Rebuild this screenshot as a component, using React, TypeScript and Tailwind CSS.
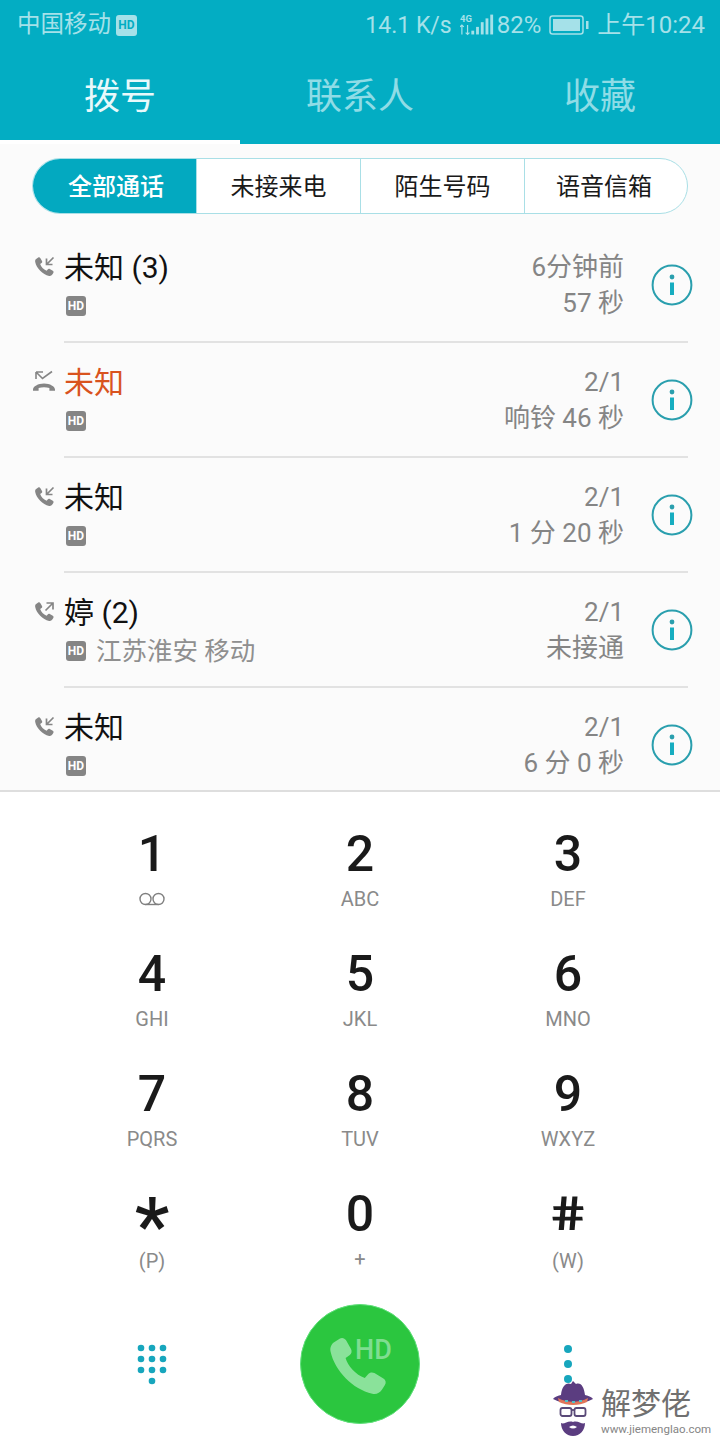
const font = "font-['Roboto','Noto_Sans_CJK_SC',sans-serif]";

type CallKind = "in" | "out" | "missed";

interface CallRow {
  kind: CallKind;
  name: string;
  place?: string;
  time: string;
  detail: string;
}

const calls: CallRow[] = [
  { kind: "in", name: "未知 (3)", time: "6分钟前", detail: "57 秒" },
  { kind: "missed", name: "未知", time: "2/1", detail: "响铃 46 秒" },
  { kind: "in", name: "未知", time: "2/1", detail: "1 分 20 秒" },
  { kind: "out", name: "婷 (2)", place: "江苏淮安 移动", time: "2/1", detail: "未接通" },
  { kind: "in", name: "未知", time: "2/1", detail: "6 分 0 秒" },
];

const keys = [
  { digit: "1", sub: "" },
  { digit: "2", sub: "ABC" },
  { digit: "3", sub: "DEF" },
  { digit: "4", sub: "GHI" },
  { digit: "5", sub: "JKL" },
  { digit: "6", sub: "MNO" },
  { digit: "7", sub: "PQRS" },
  { digit: "8", sub: "TUV" },
  { digit: "9", sub: "WXYZ" },
  { digit: "*", sub: "(P)" },
  { digit: "0", sub: "+" },
  { digit: "#", sub: "(W)" },
];

const handset =
  "M6.2 2.6 C7 2.1 7.9 2.4 8.4 3.2 L10 6 C10.4 6.8 10.2 7.6 9.5 8.1 L8.2 9 C8.9 11.6 11.6 14.6 14.6 15.7 L15.7 14.4 C16.2 13.8 17 13.6 17.8 14 L20.8 15.8 C21.6 16.3 21.8 17.2 21.3 18 L20.3 19.6 C19.6 20.7 18.4 21.2 17.1 20.9 C10.6 19.4 4.6 13.3 3.2 6.9 C2.9 5.6 3.4 4.4 4.5 3.7 Z";

function CallIcon({ kind }: { kind: CallKind }) {
  if (kind === "missed") {
    return (
      <svg width="24" height="22" viewBox="0 0 24 22" fill="none">
        <path d="M1 19.5c0-3 5-6 11-6s11 3 11 6v1.2h-5.6v-2.6c-3.4-1.2-7.4-1.2-10.8 0v2.6H1z" fill="#858585" />
        <path d="M4 2h7M4 2v7M4 2l6.500 6.500L20 1.500" stroke="#858585" strokeWidth="1.6" />
      </svg>
    );
  }
  return (
    <svg width="24" height="24" viewBox="0 0 24 24" fill="none">
      <path d={handset} fill="#858585" />
      {kind === "in" ? (
        <path d="M21.500 2.500 14.500 9.500M14.500 3.500v6h6" stroke="#858585" strokeWidth="1.700" />
      ) : (
        <path d="M13.500 10.500 20.500 3.500M14.500 3h6.500v6.500" stroke="#858585" strokeWidth="1.700" />
      )}
    </svg>
  );
}

function HdBadge() {
  return (
    <span className="ml-[2px] flex h-[20px] w-[20px] items-center justify-center rounded-[3px] bg-[#858585] text-[12px] leading-none font-bold text-white">
      HD
    </span>
  );
}

function InfoIcon() {
  return (
    <svg width="42" height="42" viewBox="0 0 42 42" fill="none">
      <circle cx="21" cy="21" r="19.400" stroke="#2a9fae" strokeWidth="2" />
      <circle cx="21" cy="13" r="2.400" fill="#2a9fae" />
      <rect x="19" y="18.500" width="4" height="12.500" fill="#17adc0" />
    </svg>
  );
}

function Row({ call }: { call: CallRow }) {
  return (
    <div className="flex h-[115px] shrink-0 px-8">
      <div className="w-8 shrink-0 pt-[27px]">
        <CallIcon kind={call.kind} />
      </div>
      <div className="flex flex-1 border-b-2 border-[#e2e2e2]">
        <div className="flex-1">
          <div className={`pt-[20px] text-[30px] leading-[40px] ${call.kind === "missed" ? "text-[#d9531e]" : "text-[#111111]"}`}>
            {call.name}
          </div>
          <div className="flex h-[36px] items-center gap-[10px]">
            <HdBadge />
            {call.place && <span className="text-[25.500px] leading-[36px] text-[#8f8f8f]">{call.place}</span>}
          </div>
        </div>
        <div className="pt-[21px] text-right text-[26px] leading-[36px] whitespace-nowrap text-[#858585]">
          <div>{call.time}</div>
          <div>{call.detail}</div>
        </div>
        <div className="-mr-[5px] ml-[27px] pt-[36px]">
          <InfoIcon />
        </div>
      </div>
    </div>
  );
}

function StatusBar() {
  return (
    <div className="flex h-[50px] items-center justify-between pr-[15px] pl-[17px] text-[#a5e1e9]">
      <div className="flex items-center gap-[5px]">
        <span className="text-[23.500px] leading-none">中国移动</span>
        <span className="flex h-[21px] w-[21px] items-center justify-center rounded-[3px] bg-[#a5e1e9] text-[12px] leading-none font-bold text-[#03adc3]">
          HD
        </span>
      </div>
      <div className="flex items-center text-[24px] leading-none">
        <span className="mr-[8px] text-[23px]">14.1 K/s</span>
        <svg width="35" height="24" viewBox="1 0 37 24" className="mr-[2px]">
          <text x="1" y="9" fontSize="10" fontWeight="700" fill="#a5e1e9" fontFamily="Roboto">4G</text>
          <path d="M3 12v10M1 14l2-2 2 2M9 12v10M7 20l2 2 2-2" stroke="#a5e1e9" strokeWidth="1.300" fill="none" />
          <rect x="13" y="18" width="3" height="4" fill="#a5e1e9" />
          <rect x="18" y="14" width="3" height="8" fill="#a5e1e9" />
          <rect x="23" y="9" width="3" height="13" fill="#a5e1e9" />
          <rect x="28" y="5" width="3" height="17" fill="#a5e1e9" />
          <rect x="33" y="1" width="3" height="21" fill="#a5e1e9" />
        </svg>
        <span className="mr-[8px]">82%</span>
        <svg width="40" height="20" viewBox="0 0 40 20" className="mr-[8px]">
          <rect x="1" y="1" width="33" height="18" rx="2.500" fill="none" stroke="#a5e1e9" strokeWidth="1.500" />
          <rect x="4" y="4" width="27" height="12" fill="#a5e1e9" />
          <rect x="37" y="6" width="2.500" height="8" fill="#a5e1e9" />
        </svg>
        <span>上午10:24</span>
      </div>
    </div>
  );
}

function Tabs() {
  return (
    <div className="grid h-[94px] grid-cols-3 text-[36px]">
      <div className="flex items-center justify-center border-b-4 border-white pt-[3px] text-[#e8f9fb]">拨号</div>
      <div className="flex items-center justify-center pt-[3px] pb-[4px] text-[#8fdce6]">联系人</div>
      <div className="flex items-center justify-center pt-[3px] pb-[4px] text-[#8fdce6]">收藏</div>
    </div>
  );
}

function Segments() {
  return (
    <div className="px-8 pt-[14px] pb-[14px]">
      <div className="flex h-[56px] overflow-hidden rounded-full border border-[#a9dfe6] bg-white text-[24px]">
        <div className="flex w-[163px] items-center justify-center bg-[#03a9c0] pt-[2px] pl-[3px] font-medium text-white">全部通话</div>
        <div className="flex w-[164px] items-center justify-center border-l border-[#a9dfe6] pt-[2px] text-[#1a1a1a]">未接来电</div>
        <div className="flex w-[164px] items-center justify-center border-l border-[#a9dfe6] pt-[2px] text-[#1a1a1a]">陌生号码</div>
        <div className="flex flex-1 items-center justify-center border-l border-[#a9dfe6] pt-[2px] pr-[4px] text-[#1a1a1a]">语音信箱</div>
      </div>
    </div>
  );
}

function Voicemail() {
  return (
    <svg width="28" height="14" viewBox="0 0 28 14" fill="none">
      <circle cx="7.500" cy="7" r="5.500" stroke="#808080" strokeWidth="1.400" />
      <circle cx="20.500" cy="7" r="5.500" stroke="#808080" strokeWidth="1.400" />
      <path d="M7.500 12.500h13" stroke="#808080" strokeWidth="1.400" />
    </svg>
  );
}

function KeyGlyph({ digit }: { digit: string }) {
  if (digit === "*") {
    return <div className="relative top-[13px] h-[52px] text-[78px] leading-[52px] font-medium text-[#1a1a1a]">*</div>;
  }
  if (digit === "#") {
    return <div className="h-[52px] scale-x-125 skew-x-6 text-[47px] leading-[52px] font-bold text-[#1a1a1a]">#</div>;
  }
  return <div className="h-[52px] text-[50px] leading-[52px] font-medium text-[#1a1a1a]">{digit}</div>;
}

function Keypad() {
  return (
    <div className="grid grid-cols-3 px-12">
      {keys.map((key) => (
        <div key={key.digit} className="flex h-[120px] flex-col items-center pt-[36px]">
          <KeyGlyph digit={key.digit} />
          <div
            className={`flex h-[24px] items-center text-[20px] leading-none text-[#8a8a8a] ${
              key.sub.startsWith("(") ? "mt-[9px]" : "mt-[7px]"
            }`}
          >
            {key.digit === "1" ? <Voicemail /> : key.sub}
          </div>
        </div>
      ))}
    </div>
  );
}

function DialDots() {
  const dots = [
    [5, 5], [16, 5], [27, 5],
    [5, 16], [16, 16], [27, 16],
    [5, 27], [16, 27], [27, 27],
    [16, 38],
  ];
  return (
    <svg width="32" height="43" viewBox="0 0 32 43">
      {dots.map(([cx, cy]) => (
        <circle key={`${cx}-${cy}`} cx={cx} cy={cy} r="3.300" fill="#17a6bd" />
      ))}
    </svg>
  );
}

function BottomBar() {
  return (
    <div className="grid flex-1 grid-cols-3 items-start px-12 pt-[32px]">
      <div className="flex h-[120px] items-center justify-center">
        <DialDots />
      </div>
      <div className="flex justify-center">
        <div className="relative h-[120px] w-[120px] rounded-full border border-[#5fe07a] bg-[#2bc63f]">
          <svg width="72" height="72" viewBox="0 0 24 24" className="absolute top-[26px] left-[20px]">
            <path d={handset} fill="#8ae29a" />
          </svg>
          <span className="absolute top-[29px] left-[54px] text-[27px] leading-[32px] font-medium text-[#7fdd90]">HD</span>
        </div>
      </div>
      <div className="flex h-[120px] flex-col items-center justify-center gap-[7px]">
        <span className="h-[8px] w-[8px] rounded-full bg-[#17a6bd]" />
        <span className="h-[8px] w-[8px] rounded-full bg-[#17a6bd]" />
        <span className="h-[8px] w-[8px] rounded-full bg-[#17a6bd]" />
      </div>
    </div>
  );
}

function Watermark() {
  return (
    <div className="absolute top-[1378px] left-[552px] flex w-[168px] gap-[7px]">
      <svg width="42" height="60" viewBox="0 0 42 60">
        <path d="M9 17 C10 8 14 4 19 6 L21 3 L24 6 C29 4 32 9 33 17 C37 18 40 19 41 21 C30 27 12 27 1 21 C2 19 5 18 9 17Z" fill="#5b3d80" />
        <path d="M6 20 C15 25 27 25 36 20 L35 24 C27 28 15 28 7 24Z" fill="#e0765a" />
        <path d="M13 23h3M20 24h3M27 23h3" stroke="#4fc1c9" strokeWidth="2" />
        <rect x="8.500" y="30" width="11" height="8" rx="2" fill="none" stroke="#5a4a78" strokeWidth="1.800" />
        <rect x="22.500" y="30" width="11" height="8" rx="2" fill="none" stroke="#5a4a78" strokeWidth="1.800" />
        <path d="M19.500 32h3" stroke="#5a4a78" strokeWidth="1.800" />
        <path d="M9 45 C12 47 16 42 21 44 C26 42 30 47 33 45 C33 52 28 58 21 58 C14 58 9 52 9 45Z" fill="#5b3d80" />
        <path d="M17 49 Q21 46 25 49 Q21 52 17 49Z" fill="#ffffff" />
      </svg>
      <div className="flex flex-col pt-[10px]">
        <span className="text-[30px] leading-[32px] whitespace-nowrap text-[#707070]">解梦佬</span>
        <span className="mt-[2px] text-[11.500px] leading-[14px] whitespace-nowrap text-[#858585]">www.jiemenglao.com</span>
      </div>
    </div>
  );
}

export default function App() {
  return (
    <div className={`relative flex h-[1440px] w-[720px] flex-col overflow-hidden bg-white ${font}`}>
      <header className="h-[144px] shrink-0 bg-[#03adc3]">
        <StatusBar />
        <Tabs />
      </header>
      <div className="h-[648px] shrink-0 border-b-2 border-[#dedede] bg-[#fbfbfb]">
        <Segments />
        <div className="h-[562px] overflow-hidden">
          {calls.map((call) => (
            <Row key={call.name + call.detail} call={call} />
          ))}
        </div>
      </div>
      <Keypad />
      <BottomBar />
      <Watermark />
    </div>
  );
}
